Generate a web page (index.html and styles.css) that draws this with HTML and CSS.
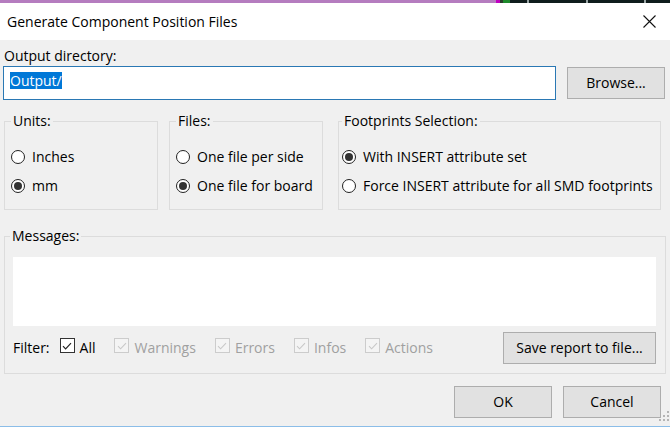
FILE: index.html
```html
<!DOCTYPE html>
<html>
<head>
<meta charset="utf-8">
<title>Generate Component Position Files</title>
<link rel="stylesheet" href="styles.css">
</head>
<body>
<div class="desk"></div>
<div class="window">
  <div class="titlebar">
    <span class="title">Generate Component Position Files</span>
    <svg class="close" width="13" height="13" viewBox="0 0 13 13"><path d="M0.5 0.5L12.5 12.5M12.5 0.5L0.5 12.5" stroke="#111" stroke-width="1.1" fill="none"/></svg>
  </div>
  <div class="client">
    <div class="outlabel">Output directory:</div>
    <div class="outrow">
      <div class="field"><span class="sel">Output/</span></div>
      <button class="btn browse">Browse...</button>
    </div>
    <div class="groups">
      <fieldset class="box units">
        <legend>Units:</legend>
        <label class="radio"><span class="rb"></span>Inches</label>
        <label class="radio"><span class="rb on"></span>mm</label>
      </fieldset>
      <fieldset class="box files">
        <legend>Files:</legend>
        <label class="radio"><span class="rb"></span>One file per side</label>
        <label class="radio"><span class="rb on"></span>One file for board</label>
      </fieldset>
      <fieldset class="box fp">
        <legend>Footprints Selection:</legend>
        <label class="radio"><span class="rb on"></span>With INSERT attribute set</label>
        <label class="radio"><span class="rb"></span>Force INSERT attribute for all SMD footprints</label>
      </fieldset>
    </div>
    <fieldset class="box messages">
      <legend>Messages:</legend>
      <div class="msgbody">
        <div class="msgarea"></div>
        <div class="filter">
          <span class="flabel">Filter:</span>
          <label class="check first"><span class="cb"><svg width="12" height="12" viewBox="0 0 12 12"><path d="M2 6.2L4.6 8.8L10 3.2" stroke="#222" stroke-width="1.2" fill="none"/></svg></span>All</label>
          <label class="check dis"><span class="cb"><svg width="12" height="12" viewBox="0 0 12 12"><path d="M2 6.2L4.6 8.8L10 3.2" stroke="#c8c8c8" stroke-width="1.1" fill="none"/></svg></span>Warnings</label>
          <label class="check dis"><span class="cb"><svg width="12" height="12" viewBox="0 0 12 12"><path d="M2 6.2L4.6 8.8L10 3.2" stroke="#c8c8c8" stroke-width="1.1" fill="none"/></svg></span>Errors</label>
          <label class="check dis"><span class="cb"><svg width="12" height="12" viewBox="0 0 12 12"><path d="M2 6.2L4.6 8.8L10 3.2" stroke="#c8c8c8" stroke-width="1.1" fill="none"/></svg></span>Infos</label>
          <label class="check dis"><span class="cb"><svg width="12" height="12" viewBox="0 0 12 12"><path d="M2 6.2L4.6 8.8L10 3.2" stroke="#c8c8c8" stroke-width="1.1" fill="none"/></svg></span>Actions</label>
          <button class="btn save">Save report to file...</button>
        </div>
      </div>
    </fieldset>
    <div class="buttons">
      <button class="btn">OK</button>
      <button class="btn">Cancel</button>
    </div>
  </div>
  <svg class="grip" width="10" height="10" viewBox="0 0 10 10">
    <rect x="8" y="0" width="2" height="2" fill="#b4b4b4"/>
    <rect x="4" y="4" width="2" height="2" fill="#b4b4b4"/>
    <rect x="8" y="4" width="2" height="2" fill="#b4b4b4"/>
    <rect x="0" y="8" width="2" height="2" fill="#b4b4b4"/>
    <rect x="4" y="8" width="2" height="2" fill="#b4b4b4"/>
    <rect x="8" y="8" width="2" height="2" fill="#b4b4b4"/>
  </svg>
</div>
</body>
</html>
```

FILE: styles.css
```css
* { box-sizing: border-box; }
html, body { margin: 0; padding: 0; }
body {
  width: 670px;
  height: 427px;
  overflow: hidden;
  font-family: "Open Sans", "Noto Sans", sans-serif;
  font-size: 14px;
  line-height: 20px;
  color: #000;
  background: #f0f0f0;
}
.desk {
  height: 3px;
  background: linear-gradient(to right,
    #b57cbf 0, #b57cbf 496px,
    #c000c0 496px, #c000c0 500px,
    #2c3b2c 500px, #2c3b2c 503px,
    #1e8a2c 503px, #1e8a2c 510px,
    #0f1c1c 510px, #0f1c1c 527px,
    #9aa6a6 527px, #9aa6a6 529px,
    #0f1c1c 529px, #0f1c1c 586px,
    #9aa6a6 586px, #9aa6a6 588px,
    #0f1c1c 588px, #0f1c1c 644px,
    #9aa6a6 644px, #9aa6a6 646px,
    #0f1c1c 646px);
}
.window {
  position: relative;
  height: 424px;
  display: flex;
  flex-direction: column;
  border-bottom: 1px solid #8bbde8;
}
.titlebar {
  height: 37px;
  flex: 0 0 37px;
  background: #fff;
  display: flex;
  align-items: center;
  padding-left: 7px;
}
.title { flex: 1; }
.close { margin-right: 14px; }
.client {
  flex: 1;
  padding: 6px 5px 0 3px;
}
.outlabel { height: 20px; padding-left: 1px; }
.outrow {
  display: flex;
  align-items: center;
  gap: 11px;
  height: 34px;
}
.field {
  flex: 0 0 553px;
  height: 34px;
  background: #fff;
  border: 1px solid #2a78b4;
  padding: 5px 6px;
}
.sel {
  display: inline-block;
  height: 17px;
  line-height: 17px;
  background: #0078d7;
  color: #fff;
  vertical-align: top;
}
.btn {
  font: inherit;
  color: #000;
  background: #e1e1e1;
  border: 1px solid #adadad;
  padding: 0;
  height: 32px;
  width: 98px;
}
.groups {
  display: flex;
  margin-top: 11px;
  padding-left: 1px;
}
.box {
  margin: 0;
  min-width: 0;
  border: 1px solid #dcdcdc;
  padding: 16px 6px 13px 6px;
}
.box legend {
  padding: 0 2px;
  line-height: 20px;
}
.units { width: 154px; }
.files { width: 154px; margin-left: 11px; }
.fp { width: 323px; margin-left: 15px; padding-left: 3px; }
.radio {
  display: flex;
  align-items: center;
  height: 20px;
  white-space: nowrap;
}
.radio + .radio { margin-top: 9px; }
.rb {
  flex: 0 0 14px;
  width: 14px;
  height: 14px;
  border: 1px solid #222;
  border-radius: 50%;
  background: #fff;
  margin-right: 7px;
  display: flex;
  align-items: center;
  justify-content: center;
}
.rb.on::after {
  content: "";
  width: 8px;
  height: 8px;
  border-radius: 50%;
  background: #333;
}
.messages {
  width: 662px;
  margin-left: 1px;
  margin-top: 16px;
  padding: 11px 9px 9px 5px;
}
.msgbody { padding-left: 3px; }
.msgarea {
  height: 69px;
  background: #fff;
}
.filter {
  display: flex;
  align-items: center;
  height: 32px;
  margin-top: 6px;
}
.check {
  display: flex;
  align-items: center;
  margin-left: 19px;
}
.check.first { margin-left: 10px; }
.cb {
  width: 15px;
  height: 15px;
  border: 1px solid #333;
  background: #fff;
  margin-right: 5px;
  margin-bottom: 5px;
  display: flex;
  align-items: center;
  justify-content: center;
}
.check.dis { color: #a0a0a0; }
.check.dis .cb { border-color: #cccccc; background: #f4f4f4; }
.save { width: 153px; margin-left: auto; }
.buttons {
  display: flex;
  justify-content: flex-end;
  gap: 11px;
  margin-top: 12px;
  padding-right: 4px;
}
.grip {
  position: absolute;
  right: 1px;
  bottom: 5px;
}
```
